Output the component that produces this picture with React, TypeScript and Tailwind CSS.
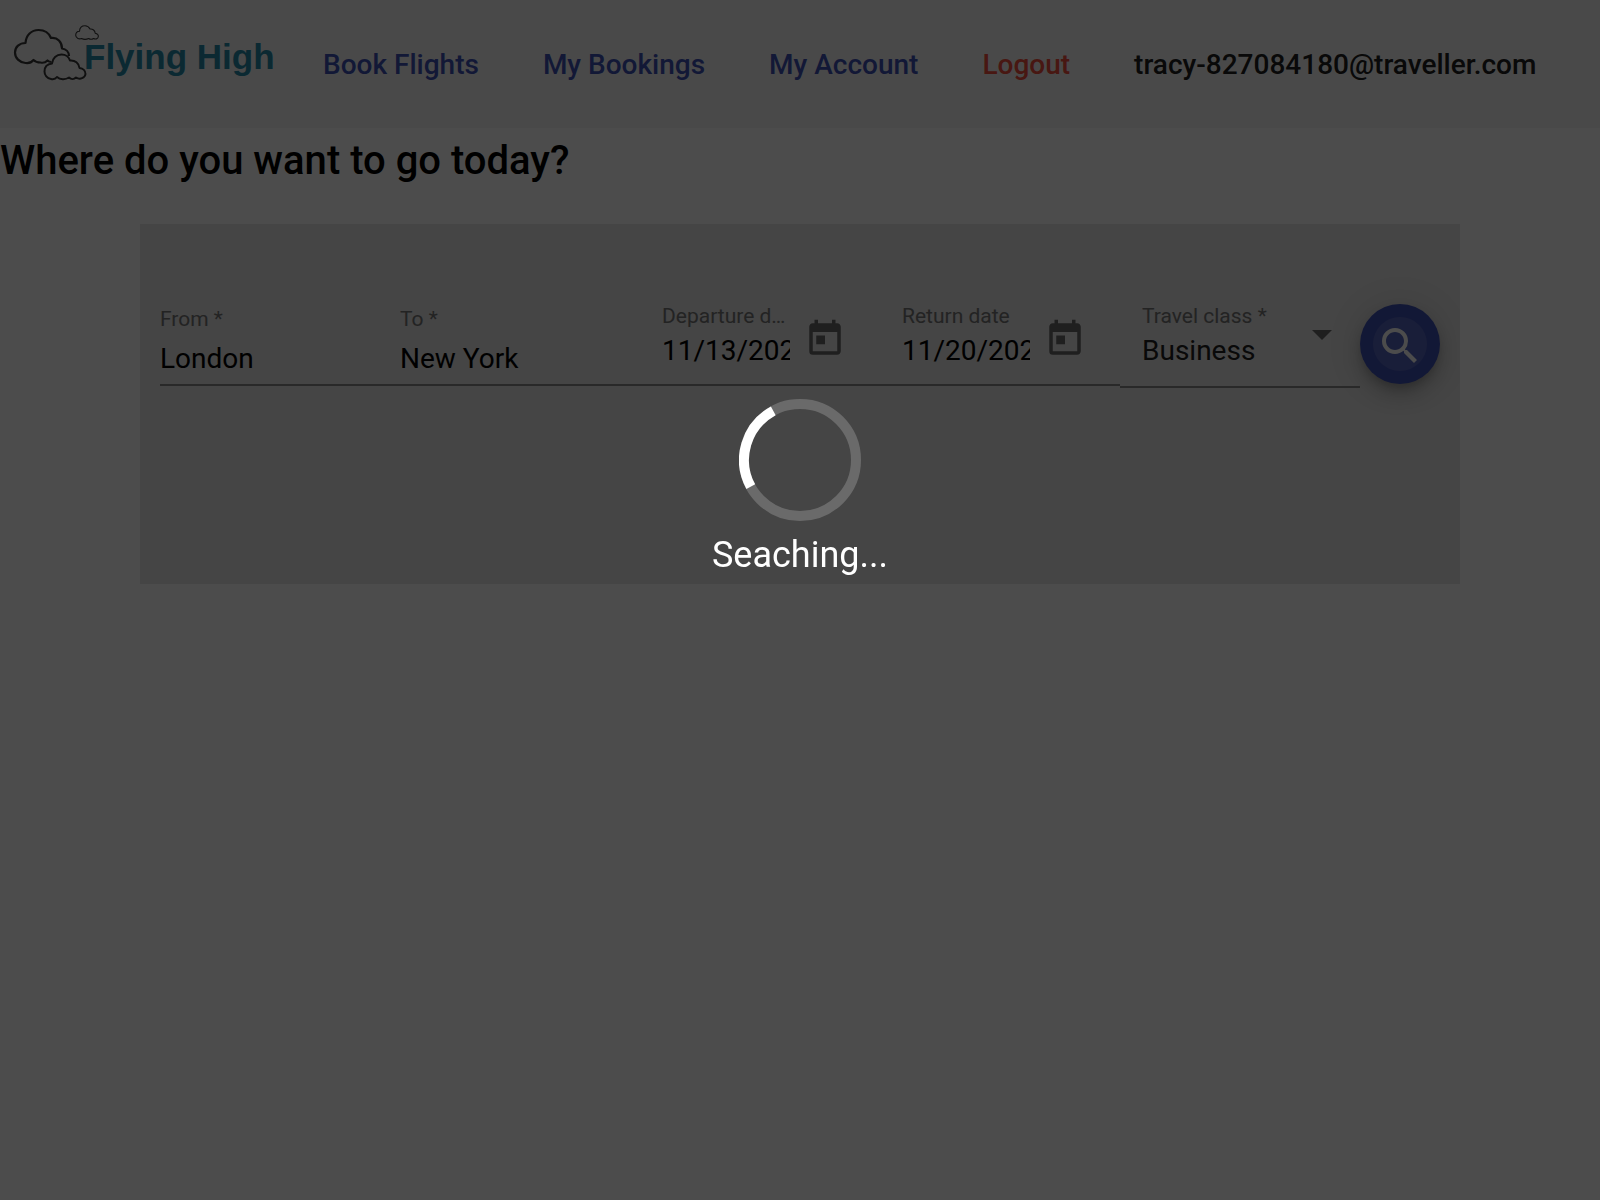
import type { ReactNode } from "react";
import { MdSearch, MdToday } from "react-icons/md";

function Logo() {
  return (
    <a href="#home" aria-label="Flying High" className="w-[291px] shrink-0 self-start">
      <svg width="280" height="96" viewBox="0 0 280 96" fill="none" stroke="#363636" strokeLinejoin="round">
        <path
          strokeWidth="2.2"
          d="M51.500 62C50 62 48.500 61.500 47.500 60.500C45.500 62.500 42.500 63 40.500 62.500C37.500 62.500 35 61.500 33.500 60C31.500 62.500 28.500 63.500 25.500 63C19.500 62.500 15 58 15 52.500C15 47 19.500 43 25.500 43C26 35 31.500 30 38.500 30C44.500 30 49 33 51 38C57.500 37 62 42 62 48.500C66 49 69 52 69 56"
        />
        <path
          strokeWidth="2"
          d="M57 77C55.500 79 53 79.500 51 79C47 78.500 44.500 75 44.500 71.500C44.500 67 47.500 64 52 63.500C52.500 58 56.500 54.500 61.500 54.500C65.500 54.500 69 57 70 60.500C75 60 79 63 79.500 68C83 68.500 85.500 71 85.500 74C85 78 80 80 76 77.500C74 79.500 71 79.500 69 77.500C65.500 79.800 60 79.800 57 77Z"
        />
        <path
          strokeWidth="1.1"
          d="M81.500 38.500C79.500 39.500 75.800 38.500 75.700 35.300C75.700 33 77.300 31.300 79.500 31.200C79.700 28 82 25.800 85 25.800C87.300 25.800 89 27 90 29C92.800 28.700 95 30.500 95.200 33.300C97.300 33.700 98.500 35.200 98.300 36.800C98 39 95.500 39.500 93.500 38.500C92 39.500 90.200 39.500 88.700 38.500C86.500 39.500 83.500 39.500 81.500 38.500Z"
        />
        <text x="84" y="69" fontFamily="Liberation Sans, Arial, sans-serif" fontSize="35" fontWeight="700" fill="#268ba8" stroke="none">
          Flying High
        </text>
      </svg>
    </a>
  );
}

function NavLink({ href, color, children }: { href: string; color: string; children: ReactNode }) {
  return (
    <a href={href} className={`px-8 text-[28px] leading-[72px] font-medium whitespace-nowrap ${color}`}>
      {children}
    </a>
  );
}

const labelClass = "block truncate text-[21px] leading-6 text-[#757575]";
const inputClass = "block h-8 w-full min-w-0 bg-transparent p-0 text-[28px] leading-8 text-black outline-none";

function TextField({ id, label, value }: { id: string; label: string; value: string }) {
  return (
    <div className="min-w-0 border-b-2 border-[#8b8b8b] pt-[3px] pb-[9px]">
      <label htmlFor={id} className={`${labelClass} mb-3`}>
        {label}
      </label>
      <input id={id} type="text" required defaultValue={value} className={inputClass} />
    </div>
  );
}

function DateField({ id, label, value }: { id: string; label: string; value: string }) {
  return (
    <div className="flex min-w-0 items-start border-b-2 border-[#8b8b8b] pr-[34px] pb-[17px] pl-[22px]">
      <div className="min-w-0 flex-1">
        <label htmlFor={id} className={`${labelClass} mb-[7px]`}>
          {label}
        </label>
        <input id={id} type="text" defaultValue={value} className={inputClass} />
      </div>
      <button type="button" aria-label={`Open calendar for ${label}`} className="mt-3.5 ml-3.5 text-[#6a6a6a]">
        <MdToday size={42} />
      </button>
    </div>
  );
}

export default function App() {
  return (
    <div className="min-h-screen bg-white font-[Roboto,sans-serif] text-black">
      <header className="flex h-32 items-center bg-[#f5f5f5]">
        <Logo />
        <nav className="flex items-center pt-0.5">
          <NavLink href="#book" color="text-[#3f51b5]">Book Flights</NavLink>
          <NavLink href="#bookings" color="text-[#3f51b5]">My Bookings</NavLink>
          <NavLink href="#account" color="text-[#3f51b5]">My Account</NavLink>
          <NavLink href="#logout" color="text-[#f04e3c]">Logout</NavLink>
          <NavLink href="#profile" color="text-[#212121]">tracy-827084180@traveller.com</NavLink>
        </nav>
      </header>

      <main>
        <h1 className="mb-8 pt-0.5 text-[40px] leading-[62px] font-medium">Where do you want to go today?</h1>
        <form className="mx-[140px] flex min-h-[360px] items-start bg-[#e6e6e6] px-5 pt-20">
          <div className="grid min-w-0 flex-1 grid-cols-5 items-start">
            <TextField id="from" label="From *" value="London" />
            <TextField id="to" label="To *" value="New York" />
            <DateField id="departure" label="Departure date" value="11/13/2020" />
            <DateField id="return" label="Return date" value="11/20/2020" />
            <div className="relative min-w-0 border-b-2 border-[#8b8b8b] pb-[19px] pl-[22px]">
              <label htmlFor="travel-class" className={`${labelClass} mb-[7px]`}>
                Travel class *
              </label>
              <select
                id="travel-class"
                defaultValue="Business"
                className="block h-8 w-full appearance-none bg-transparent p-0 text-[28px] leading-8 text-[#212121] outline-none"
              >
                <option>Economy</option>
                <option>Business</option>
                <option>First</option>
              </select>
              <svg width="20" height="10" viewBox="0 0 20 10" className="pointer-events-none absolute top-[26px] right-7">
                <path d="M0 0h20L10 10z" fill="#6a6a6a" />
              </svg>
            </div>
          </div>
          <button
            type="submit"
            aria-label="Search flights"
            className="flex size-20 shrink-0 items-center justify-center rounded-full bg-[#3f51b5] text-white shadow-[0_6px_10px_-2px_rgba(0,0,0,0.2),0_12px_20px_rgba(0,0,0,0.14),0_2px_36px_rgba(0,0,0,0.12)]"
          >
            <span className="flex size-[54px] items-center justify-center rounded-full bg-white/12">
              <MdSearch size={48} className="mt-1 shrink-0" />
            </span>
          </button>
        </form>
      </main>

      <div role="status" className="fixed inset-0 flex flex-col items-center bg-black/70 pt-[399px] text-white">
        <svg width="122" height="122" viewBox="0 0 122 122" fill="none" strokeWidth="10">
          <circle cx="61" cy="61" r="56" stroke="white" strokeOpacity="0.2" />
          <circle cx="61" cy="61" r="56" stroke="white" pathLength="360" strokeDasharray="90 270" transform="rotate(151.5 61 61)" />
        </svg>
        <p className="mt-3 text-[36px] leading-[44px]">Seaching...</p>
      </div>
    </div>
  );
}
